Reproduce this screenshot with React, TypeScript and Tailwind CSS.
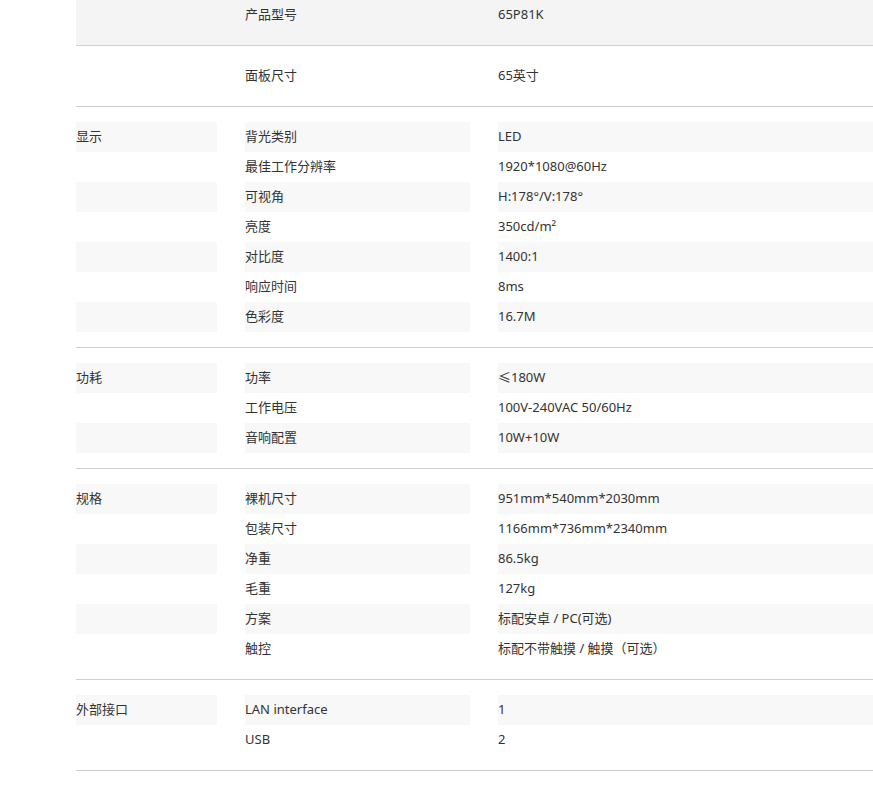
const sections: { label: string; rows: [string, string][]; }[] = [
  { label: "显示", rows: [["背光类别","LED"],["最佳工作分辨率","1920*1080@60Hz"],["可视角","H:178°/V:178°"],["亮度","350cd/m²"],["对比度","1400:1"],["响应时间","8ms"],["色彩度","16.7M"]] },
  { label: "功耗", rows: [["功率","≤180W"],["工作电压","100V-240VAC 50/60Hz"],["音响配置","10W+10W"]] },
  { label: "规格", rows: [["裸机尺寸","951mm*540mm*2030mm"],["包装尺寸","1166mm*736mm*2340mm"],["净重","86.5kg"],["毛重","127kg"],["方案","标配安卓 / PC(可选)"],["触控","标配不带触摸 / 触摸（可选）"]] },
  { label: "外部接口", rows: [["LAN interface","1"],["USB","2"]] },
];

function Row({ a, b, c, striped }: { a: string; b: string; c: string; striped: boolean }) {
  const bg = striped ? "bg-[#f8f8f8]" : "";
  return (
    <div className="flex h-[30px] items-center">
      <div className={`w-[141px] h-full flex items-center ${bg}`}>{a}</div>
      <div className={`ml-[28px] w-[225px] h-full flex items-center ${bg}`}>{b}</div>
      <div className={`ml-[28px] flex-1 h-full flex items-center ${bg}`}>{c}</div>
    </div>
  );
}

export default function App() {
  return (
    <div className="bg-white min-h-[805px] text-[13px] text-[#333]" style={{ fontFamily: '"Segoe UI", "Noto Sans", "Noto Sans CJK SC", sans-serif' }}>
      <div className="ml-[76px] w-[797px]">
        <div className="bg-[#f4f4f4] pb-[15px] border-b border-[#cfcfcf]">
          <Row a="" b="产品型号" c="65P81K" striped={false} />
        </div>
        <div className="py-[15px] border-b border-[#cfcfcf]">
          <Row a="" b="面板尺寸" c="65英寸" striped={false} />
        </div>
        {sections.map((s) => (
          <div key={s.label} className="pt-[15px] pb-[15px] border-b border-[#cfcfcf]">
            {s.rows.map((r, i) => (
              <Row key={i} a={i === 0 ? s.label : ""} b={r[0]} c={r[1]} striped={i % 2 === 0} />
            ))}
          </div>
        ))}
      </div>
    </div>
  );
}
